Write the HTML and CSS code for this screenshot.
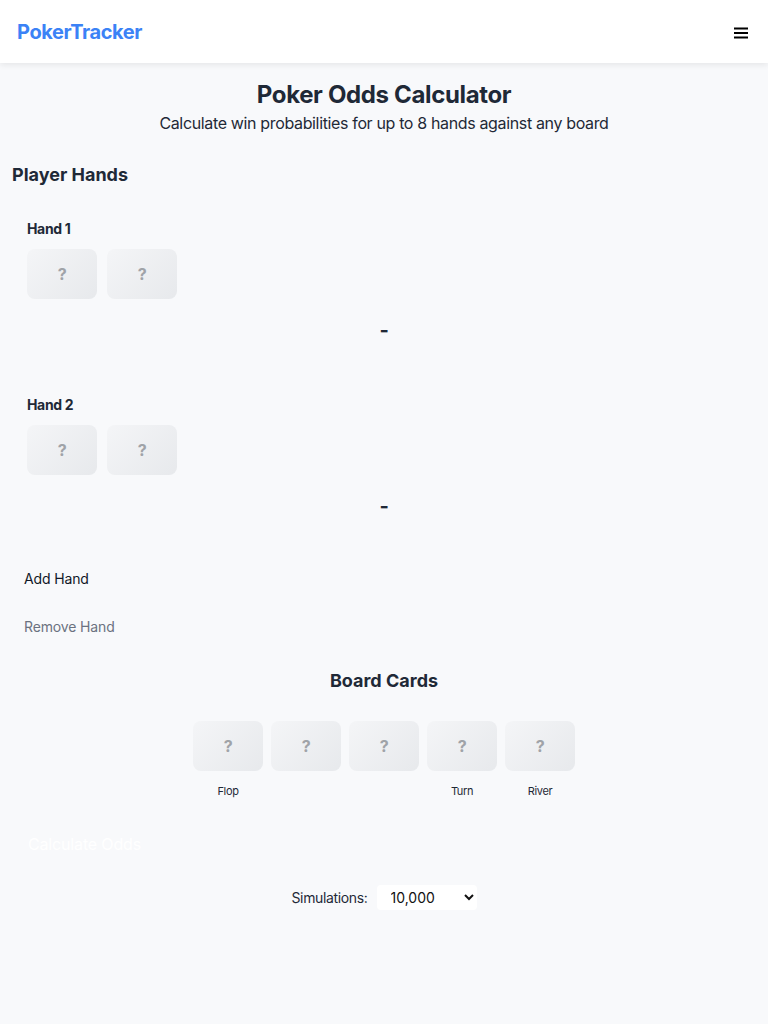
FILE: index.html
```html
<!DOCTYPE html>
<html lang="en">
<head>
<meta charset="utf-8">
<title>Poker Odds Calculator</title>
<link rel="stylesheet" href="styles.css">
</head>
<body>
<header class="topbar">
  <span class="logo">PokerTracker</span>
  <svg class="menu" width="14" height="12" viewBox="0 0 14 12" aria-label="Menu">
    <rect x="0" y="0.5" width="14" height="2" fill="#000"/>
    <rect x="0" y="5" width="14" height="2" fill="#000"/>
    <rect x="0" y="9.5" width="14" height="2" fill="#000"/>
  </svg>
</header>
<main class="page">
  <h1 class="title">Poker Odds Calculator</h1>
  <p class="subtitle">Calculate win probabilities for up to 8 hands against any board</p>

  <section class="hands">
    <h2 class="section-title">Player Hands</h2>
    <div class="hand">
      <div class="hand-label">Hand 1</div>
      <div class="cards">
        <div class="card">?</div>
        <div class="card">?</div>
      </div>
      <div class="result">-</div>
    </div>
    <div class="hand">
      <div class="hand-label">Hand 2</div>
      <div class="cards">
        <div class="card">?</div>
        <div class="card">?</div>
      </div>
      <div class="result">-</div>
    </div>
    <div class="hand-actions">
      <button class="btn add">Add Hand</button>
      <button class="btn remove">Remove Hand</button>
    </div>
  </section>

  <section class="board">
    <h2 class="board-title">Board Cards</h2>
    <div class="board-cards">
      <div class="slot"><div class="card">?</div><span class="slot-label">Flop</span></div>
      <div class="slot"><div class="card">?</div><span class="slot-label"></span></div>
      <div class="slot"><div class="card">?</div><span class="slot-label"></span></div>
      <div class="slot"><div class="card">?</div><span class="slot-label">Turn</span></div>
      <div class="slot"><div class="card">?</div><span class="slot-label">River</span></div>
    </div>
  </section>

  <button class="btn calc">Calculate Odds</button>

  <div class="sims">
    <label class="sims-label" for="sims">Simulations:</label>
    <select id="sims" class="sims-select">
      <option>10,000</option>
    </select>
  </div>
</main>
</body>
</html>
```

FILE: styles.css
```css
* { box-sizing: border-box; }
html, body { margin: 0; padding: 0; }
body {
  font-family: Inter, "Noto Sans", "Liberation Sans", sans-serif;
  letter-spacing: -0.022em;
  background: #f8f9fb;
  color: #1f2937;
  min-height: 1024px;
}
.topbar {
  height: 63px;
  background: #ffffff;
  box-shadow: 0 2px 6px rgba(0,0,0,0.08);
  display: flex;
  align-items: center;
  justify-content: space-between;
  padding: 0 20px 0 17px;
}
.logo {
  font-size: 20px;
  font-weight: 700;
  color: #3b82f6;
  letter-spacing: -0.4px;
}
.menu {
  display: block;
  margin-top: 2px;
}
.page {
  padding: 16px 12px 0;
}
.title {
  margin: 0;
  text-align: center;
  font-size: 24px;
  line-height: 32px;
  font-weight: 700;
  color: #1f2937;
}
.subtitle {
  margin: 0;
  text-align: center;
  font-size: 16px;
  line-height: 24px;
  color: #1f2937;
}
.section-title {
  margin: 26px 0 0;
  font-size: 18px;
  line-height: 28px;
  font-weight: 700;
  letter-spacing: 0;
}
.hand {
  padding: 30px 15px 0;
}
.hand + .hand {
  padding-top: 23px;
}
.hand-label {
  font-size: 14px;
  line-height: 20px;
  font-weight: 700;
  margin-bottom: 10px;
}
.cards {
  display: flex;
  gap: 10px;
}
.card {
  width: 70px;
  height: 50px;
  border-radius: 8px;
  background: linear-gradient(135deg, #f4f5f7, #e7e9ec);
  display: flex;
  align-items: center;
  justify-content: center;
  color: #a0a3a8;
  font-size: 16px;
  font-weight: 700;
}
.result {
  text-align: center;
  font-size: 20px;
  font-weight: 700;
  line-height: 28px;
  margin-top: 17px;
  margin-bottom: 28px;
}
.hand-actions {
  display: flex;
  flex-direction: column;
  align-items: flex-start;
  gap: 28px;
  padding: 21px 12px 0;
}
.btn {
  border: none;
  background: transparent;
  font-family: inherit;
  letter-spacing: -0.01em;
  font-size: 14px;
  line-height: 20px;
  padding: 0;
  cursor: pointer;
}
.add { color: #111827; }
.remove { color: #6b7280; }
.board {
  margin-top: 30px;
}
.board-title {
  margin: 0;
  text-align: center;
  font-size: 18px;
  line-height: 28px;
  font-weight: 700;
  letter-spacing: 0;
}
.board-cards {
  display: flex;
  justify-content: center;
  gap: 8px;
  margin-top: 26px;
}
.slot {
  display: flex;
  flex-direction: column;
  align-items: center;
  gap: 12px;
}
.slot-label {
  font-size: 11px;
  line-height: 16px;
  height: 16px;
  color: #1f2937;
}
.calc {
  display: block;
  margin: 33px 0 0 16px;
  font-size: 16px;
  line-height: 24px;
  color: #ffffff;
}
.sims {
  display: flex;
  justify-content: center;
  align-items: center;
  gap: 9px;
  margin-top: 29px;
}
.sims-label {
  font-size: 14px;
  color: #1f2937;
}
.sims-select {
  width: 100px;
  height: 25px;
  border: none;
  border-radius: 4px;
  background: #ffffff;
  font-family: inherit;
  font-size: 14px;
  padding: 0 6px 0 10px;
  color: #111;
}
```
